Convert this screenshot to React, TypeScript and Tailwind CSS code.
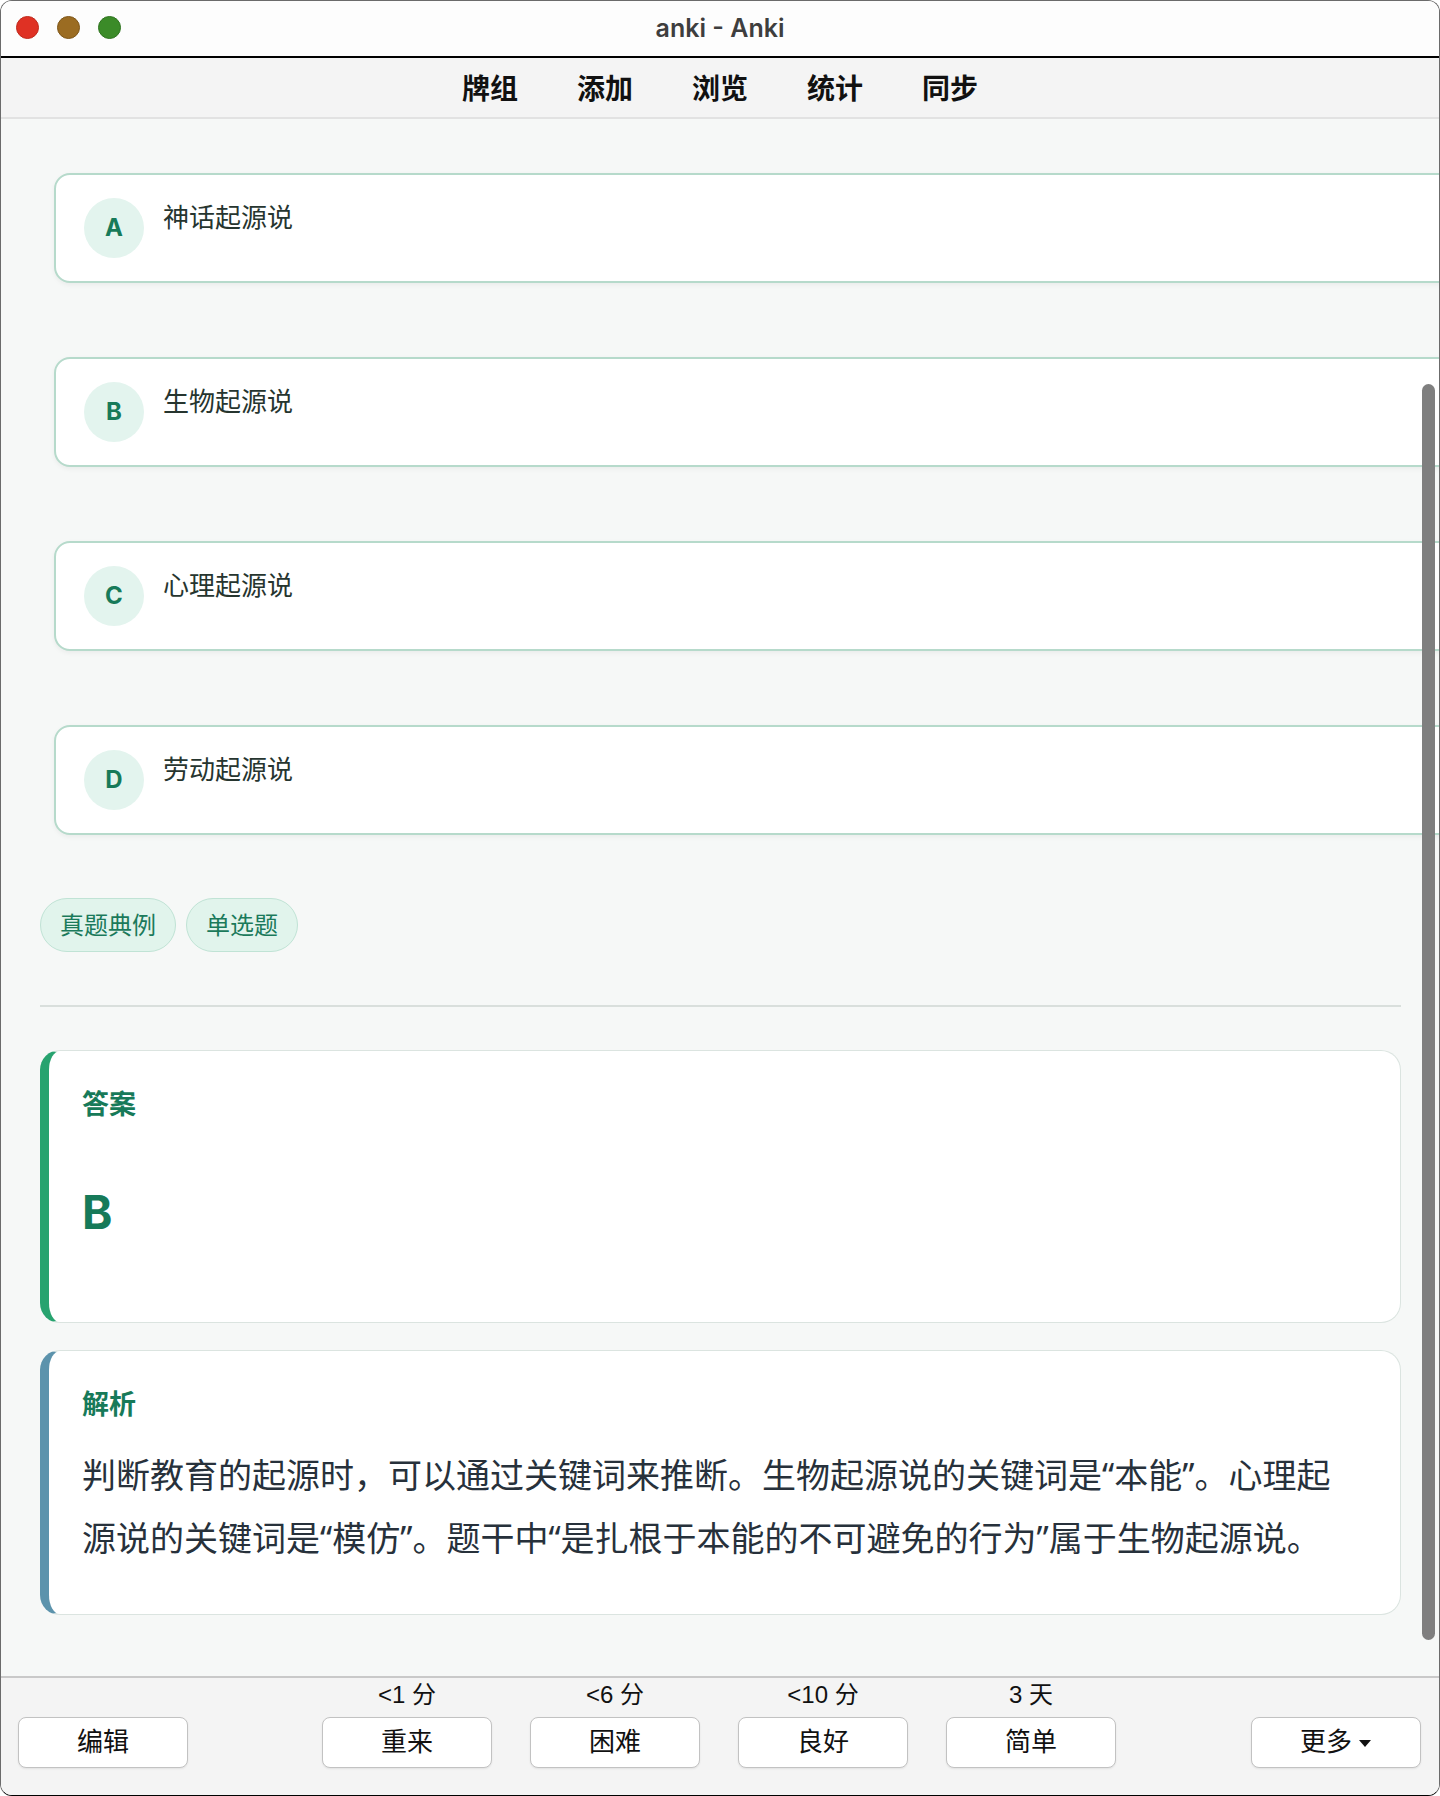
import React from "react";

const options = [
  { key: "A", text: "神话起源说" },
  { key: "B", text: "生物起源说" },
  { key: "C", text: "心理起源说" },
  { key: "D", text: "劳动起源说" },
];

const tags = ["真题典例", "单选题"];

const ease = [
  { label: "<1 分", text: "重来" },
  { label: "<6 分", text: "困难" },
  { label: "<10 分", text: "良好" },
  { label: "3 天", text: "简单" },
];

const cjk = "font-['Noto_Sans','Noto_Sans_CJK_SC',sans-serif]";
const ui = "font-['Liberation_Sans','Noto_Sans_CJK_SC',sans-serif]";

const Button = ({ children }: { children: React.ReactNode }) => (
  <button className={`w-[170px] h-[51px] bg-white border border-[#c2c2c2] rounded-[8px] shadow-[0_1px_2px_rgba(0,0,0,0.08)] flex items-center justify-center text-[26px] text-[#111] ${ui}`}>
    {children}
  </button>
);

const App = () => {
  return (
    <div className="w-[1440px] h-[1796px] bg-white">
      <div className="w-full h-full flex flex-col overflow-hidden rounded-[12px] border border-[#6b6b6b] border-b-black">
        {/* title bar */}
        <div className="h-[55px] shrink-0 bg-[#fdfdfd] relative flex items-center justify-center">
          <div className="absolute left-[15px] top-[15px] flex gap-[18px]">
            <span className="w-[23px] h-[23px] rounded-full bg-[#df3124] border border-[#c02a1c]"></span>
            <span className="w-[23px] h-[23px] rounded-full bg-[#9b6c22] border border-[#7e5618]"></span>
            <span className="w-[23px] h-[23px] rounded-full bg-[#3b8b28] border border-[#2f7420]"></span>
          </div>
          <span className="text-[25px] font-semibold text-[#3e3e3e] font-['Inter',sans-serif]">anki - Anki</span>
        </div>
        <div className="h-[2px] shrink-0 bg-black"></div>

        {/* toolbar */}
        <div className={`h-[61px] shrink-0 bg-[#f4f4f4] border-b-2 border-[#e2e2e2] flex items-center justify-center gap-[59px] text-[28px] font-bold text-[#111] ${cjk}`}>
          <span>牌组</span>
          <span>添加</span>
          <span>浏览</span>
          <span>统计</span>
          <span>同步</span>
        </div>

        {/* card content */}
        <div className={`flex-1 relative overflow-hidden bg-[#f6f8f7] ${cjk}`}>
          <div className="pl-[39px] pt-[54px] w-[1400px]">
            <div className="flex flex-col gap-[74px]">
              {options.map((o) => (
                <div key={o.key} className="ml-[14px] w-[1420px] h-[110px] bg-white border-2 border-[#b6dacb] rounded-[16px] shadow-[0_2px_5px_rgba(0,0,0,0.05)] flex items-start pt-[23px] pl-[28px] gap-[19px]">
                  <div className="w-[60px] h-[60px] rounded-full bg-[#e3f4ee] flex items-center justify-center text-[24px] font-bold text-[#177a59] font-['Inter',sans-serif]">
                    {o.key}
                  </div>
                  <span className="text-[26px] leading-[38px] text-[#26352f]">{o.text}</span>
                </div>
              ))}
            </div>

            <div className="mt-[63px] flex gap-[10px]">
              {tags.map((t) => (
                <span key={t} className="h-[54px] px-[19px] rounded-full bg-[#e1f4ec] border-[1.5px] border-[#c0e3d5] flex items-center text-[24px] text-[#1b7a5b]">
                  {t}
                </span>
              ))}
            </div>

            <div className="mt-[53px] h-[2px] bg-[#d9dfdc]"></div>

            {/* answer */}
            <div className="mt-[43px] h-[273px] bg-white rounded-[20px] border-[1.5px] border-[#dbe4e0] border-l-[9px] border-l-[#27a36f] pl-[33px] pt-[35px]">
              <div className="text-[27px] leading-[36px] font-bold text-[#177a59]">答案</div>
              <div className="mt-[62px] text-[46px] leading-[56px] font-bold text-[#167a59] font-['Inter',sans-serif]">B</div>
            </div>

            {/* explanation */}
            <div className="mt-[27px] bg-white rounded-[20px] border-[1.5px] border-[#dbe4e0] border-l-[9px] border-l-[#5c93ac] pl-[33px] pr-[36px] pt-[35px] pb-[44px]">
              <div className="text-[27px] leading-[36px] font-bold text-[#177a59]">解析</div>
              <p className="mt-[22px] text-[34px] leading-[63px] text-[#27313b]">
                判断教育的起源时，可以通过关键词来推断。生物起源说的关键词是“本能”。心理起源说的关键词是“模仿”。题干中“是扎根于本能的不可避免的行为”属于生物起源说。
              </p>
            </div>
          </div>

          {/* scrollbar */}
          <div className="absolute left-[1421px] top-[265px] w-[13px] h-[1256px] rounded-full bg-[#7f7f7f]"></div>
        </div>

        {/* answer buttons */}
        <div className={`h-[119px] shrink-0 bg-[#f4f4f4] border-t-2 border-[#c9c9c9] flex items-start pt-[4px] pl-[17px] pr-[18px] ${ui}`}>
          <div className="flex flex-col items-center">
            <div className="h-[26px]"></div>
            <div className="mt-[9px]">
              <Button>编辑</Button>
            </div>
          </div>
          <div className="ml-[134px] flex gap-[38px]">
            {ease.map((e) => (
              <div key={e.text} className="flex flex-col items-center">
                <div className="h-[26px] text-[24px] leading-[26px] text-[#111]">{e.label}</div>
                <div className="mt-[9px]">
                  <Button>{e.text}</Button>
                </div>
              </div>
            ))}
          </div>
          <div className="ml-auto flex flex-col items-center">
            <div className="h-[26px]"></div>
            <div className="mt-[9px]">
              <Button>
                <span>更多</span>
                <svg width="14" height="10" viewBox="0 0 14 10" className="ml-[6px]">
                  <path d="M1 2 L13 2 L7 9 Z" fill="#111" />
                </svg>
              </Button>
            </div>
          </div>
        </div>
      </div>
    </div>
  );
};

export default App;
